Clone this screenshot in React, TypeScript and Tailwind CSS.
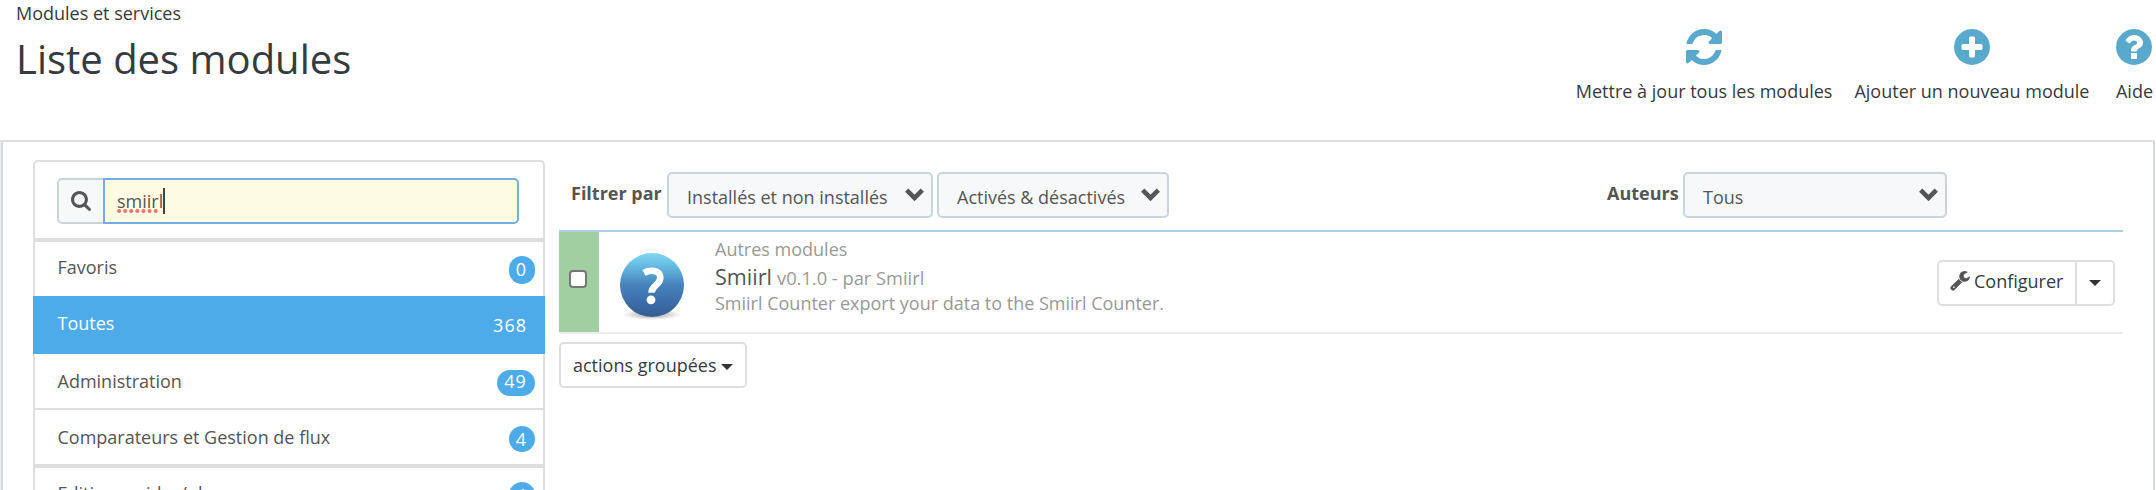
import React from "react";

const SEARCH =
  "M1152 832q0-185-131.5-316.5t-316.5-131.5-316.5 131.5-131.5 316.5 131.5 316.5 316.5 131.5 316.5-131.5 131.5-316.5zm512 832q0 52-38 90t-90 38q-54 0-90-38l-343-342q-179 124-399 124-143 0-273.5-55.5t-225-150-150-225-55.5-273.5 55.5-273.5 150-225 225-150 273.5-55.5 273.5 55.5 225 150 150 225 55.5 273.5q0 220-124 399l343 343q37 37 37 90z";
const REFRESH =
  "M1511 1056q0 5-1 7-64 268-268 434.5t-478 166.5q-146 0-282.5-55t-243.5-157l-129 129q-19 19-45 19t-45-19-19-45v-448q0-26 19-45t45-19h448q26 0 45 19t19 45-19 45l-137 137q71 66 161 102t187 36q134 0 250-65t186-179q11-17 53-117 8-23 30-23h192q13 0 22.5 9.5t9.5 22.5zm25-800v448q0 26-19 45t-45 19h-448q-26 0-45-19t-19-45 19-45l138-138q-148-137-349-137-134 0-250 65t-186 179q-11 17-53 117-8 23-30 23h-199q-13 0-22.5-9.5t-9.5-22.5v-7q65-268 270-434.5t480-166.5q146 0 284 55.5t245 156.5l130-129q19-19 45-19t45 19 19 45z";
const PLUS =
  "M1216 960v-128q0-26-19-45t-45-19h-256v-256q0-26-19-45t-45-19h-128q-26 0-45 19t-19 45v256h-256q-26 0-45 19t-19 45v128q0 26 19 45t45 19h256v256q0 26 19 45t45 19h128q26 0 45-19t19-45v-256h256q26 0 45-19t19-45zm320-64q0 209-103 385.5t-279.5 279.5-385.5 103-385.5-103-279.5-279.5-103-385.5 103-385.5 279.5-279.5 385.5-103 385.5 103 279.5 279.5 103 385.5z";
const HELP =
  "M896 1376v-192q0-14-9-23t-23-9h-192q-14 0-23 9t-9 23v192q0 14 9 23t23 9h192q14 0 23-9t9-23zm256-672q0-88-55.5-163t-138.5-116-170-41q-243 0-371 213-15 24 8 42l132 100q7 6 19 6 16 0 25-12 53-68 86-92 34-24 86-24 48 0 85.5 26t37.5 59q0 38-20 61t-68 45q-63 28-115.5 86.5t-52.5 125.5v36q0 14 9 23t23 9h192q14 0 23-9t9-23q0-19 21.5-49.5t54.5-49.5q32-18 49-28.5t46-35 44.5-48 28-60.5 12.5-81zm384 192q0 209-103 385.5t-279.5 279.5-385.5 103-385.5-103-279.5-279.5-103-385.5 103-385.5 279.5-279.5 385.5-103 385.5 103 279.5 279.5 103 385.5z";
const WRENCH =
  "M384 1472q0-26-19-45t-45-19-45 19-19 45 19 45 45 19 45-19 19-45zm644-420l-682 682q-37 37-90 37-52 0-91-37l-106-108q-38-36-38-90 0-53 38-91l681-681q39 98 114.5 173.5t173.5 114.5zm634-435q0 39-23 106-47 134-164.5 217.5t-258.5 83.5q-185 0-316.5-131.5t-131.5-316.5 131.5-316.5 316.5-131.5q58 0 121.5 16.5t107.5 46.5q16 11 16 28t-16 28l-293 169v224l193 107q5-3 79-48.5t135.5-81 70.5-35.5q15 0 23.5 10t8.5 25z";

function ToolbarAction({ path, label, className }: { path: string; label: string; className?: string }) {
  return (
    <a className={`flex flex-col items-center whitespace-nowrap ${className ?? ""}`}>
      <svg className="h-9 w-9 shrink-0" viewBox="0 128 1536 1536" fill="#58a9cb">
        <path d={path} />
      </svg>
      <span className="mt-[14px] leading-6">{label}</span>
    </a>
  );
}

function Select({ label, className }: { label: string; className: string }) {
  return (
    <div
      className={`flex h-[46px] justify-between rounded-[5px] border-2 border-[#c7d6db] bg-[#f6f8fa] pl-[18px] pr-[7px] pt-[11px] ${className}`}
    >
      <span className="whitespace-nowrap leading-6">{label}</span>
      <svg className="mt-[3px] h-[13px] w-[19px]" viewBox="0 0 19 13">
        <path d="M1.7 2.2 L9.5 10 L17.3 2.2" fill="none" stroke="#555" strokeWidth="4.6" />
      </svg>
    </div>
  );
}

function Caret({ className }: { className?: string }) {
  return (
    <svg className={`h-[6px] w-3 ${className ?? ""}`} viewBox="0 0 12 6" fill="#333">
      <path d="M0 0h12L6 6z" />
    </svg>
  );
}

function Category({
  name,
  count,
  row,
  text,
  badge,
}: {
  name: string;
  count: string;
  row: string;
  text: string;
  badge: string;
}) {
  return (
    <li className={`flex shrink-0 items-start justify-between pl-[22.5px] pr-2 ${row}`}>
      <span className={`whitespace-nowrap leading-6 ${text}`}>{name}</span>
      <span
        className={`flex justify-center rounded-full bg-[#4eabea] pl-[7px] pr-2 tracking-[1px] text-white ${badge}`}
      >
        {count}
      </span>
    </li>
  );
}

function ModuleLogo() {
  return (
    <svg className="ml-5 mt-[19px] h-[70px] w-[66px] shrink-0" viewBox="0 0 66 70">
      <defs>
        <linearGradient id="ball" x1="0" y1="0" x2="0" y2="1">
          <stop offset="0" stopColor="#7fd6f2" />
          <stop offset="0.18" stopColor="#68bfe4" />
          <stop offset="0.5" stopColor="#4682bb" />
          <stop offset="0.75" stopColor="#3d6fab" />
          <stop offset="1" stopColor="#355c90" />
        </linearGradient>
        <radialGradient id="shade">
          <stop offset="0" stopColor="#777" stopOpacity="0.7" />
          <stop offset="0.6" stopColor="#999" stopOpacity="0.4" />
          <stop offset="1" stopColor="#bbb" stopOpacity="0" />
        </radialGradient>
      </defs>
      <ellipse cx="33" cy="63.5" rx="30" ry="5.5" fill="url(#shade)" />
      <circle cx="33" cy="34" r="32" fill="url(#ball)" />
      <path
        d="M25 21.800c6-3.300 16.300-3 16.300 5 0 7.500-8.800 7.500-8.800 15"
        fill="none"
        stroke="#fff"
        strokeWidth="6.6"
      />
      <circle cx="32" cy="48.8" r="4.4" fill="#fff" />
    </svg>
  );
}

export default function App() {
  return (
    <div className="flex h-[490px] w-full flex-col overflow-hidden bg-white font-['Open_Sans',sans-serif] text-[18px] text-[#555]">
      <header className="flex h-[140px] shrink-0 justify-between pl-4 pr-[3px] text-[#363a41]">
        <div className="pt-px">
          <div className="leading-6">Modules et services</div>
          <h1 className="mt-[9px] text-[40px] leading-[50px]">Liste des modules</h1>
        </div>
        <nav className="flex pt-[29px]">
          <ToolbarAction path={REFRESH} label="Mettre à jour tous les modules" />
          <ToolbarAction path={PLUS} label="Ajouter un nouveau module" className="ml-[22px]" />
          <ToolbarAction path={HELP} label="Aide" className="ml-[26.5px]" />
        </nav>
      </header>

      <main className="mr-px flex min-h-0 flex-1 border-t-2 border-[#dedede]">
        <div className="w-[3px] shrink-0 border-r-2 border-[#d3d8db] bg-[#eff1f2]" />

        <aside className="ml-[30px] mt-[18px] flex w-[512px] shrink-0 flex-col">
          <div className="h-20 shrink-0 rounded-t-[5px] border-2 border-[#dedede] px-[22px] pt-4">
            <div className="flex h-[46px] w-[462px]">
              <div className="flex w-[46px] items-center justify-center rounded-l-[5px] border-2 border-r-0 border-[#c7d6db] bg-[#f6f8fa]">
                <svg className="h-5 w-5" viewBox="0 128 1664 1664" fill="#555">
                  <path d={SEARCH} />
                </svg>
              </div>
              <div className="flex flex-1 rounded-r-[5px] border-2 border-[#74ace6] bg-[#fdfbe2] pl-3 pt-2">
                <span className="relative h-[26px] leading-[26px]">
                  smiirl
                  <svg className="absolute left-0 top-[21px] h-1 w-[41px]" viewBox="0 0 41 4">
                    <path
                      d="M2 2H40"
                      stroke="#f0776c"
                      strokeWidth="4"
                      strokeLinecap="round"
                      strokeDasharray="0.1 6"
                    />
                  </svg>
                </span>
                <span className="h-[26px] w-0.5 bg-[#444]" />
              </div>
            </div>
          </div>
          <ul className="flex min-h-0 flex-col overflow-hidden">
            <Category
              name="Favoris"
              count="0"
              row="h-14 border-x-2 border-t-2 border-[#dedede]"
              text="mt-[13px]"
              badge="mt-3.5 h-7 w-[26px] leading-[26px]"
            />
            <Category
              name="Toutes"
              count="368"
              row="h-[58px] border-2 border-[#4eabea] bg-[#4eabea] text-white"
              text="mt-[13px]"
              badge="mt-3.5 h-7 leading-[26px]"
            />
            <Category
              name="Administration"
              count="49"
              row="h-[54px] border-x-2 border-[#dedede]"
              text="mt-[15px]"
              badge="mt-4 h-[26px] w-[38px] leading-[22px]"
            />
            <Category
              name="Comparateurs et Gestion de flux"
              count="4"
              row="h-14 border-x-2 border-t-2 border-[#dedede]"
              text="mt-[15px]"
              badge="mt-4 h-[26px] w-[26px] leading-[26px]"
            />
            <Category
              name="Edition, guides/plans"
              count="4"
              row="h-14 border-x-2 border-t-4 border-[#dedede]"
              text="mt-[13px]"
              badge="mt-3.5 h-[26px] w-[26px] leading-[26px]"
            />
          </ul>
        </aside>

        <section className="ml-[14px] flex w-[1564px] shrink-0 flex-col pt-[30px]">
          <div className="flex h-[58px] shrink-0">
            <strong className="ml-3 w-24 whitespace-nowrap pt-[9px] leading-6">Filtrer par</strong>
            <Select label="Installés et non installés" className="w-[266px]" />
            <Select label="Activés & désactivés" className="ml-1 w-[232px]" />
            <strong className="ml-[438px] w-[76px] pt-[9px] leading-6">Auteurs</strong>
            <Select label="Tous" className="w-[264px]" />
          </div>

          <article className="flex h-[104px] shrink-0 border-y-2 border-t-[#a8d0ea] border-b-[#ececec]">
            <div className="flex w-10 shrink-0 justify-center bg-[#a2cfa2] pt-[38px]">
              <span className="-ml-0.5 h-[18px] w-[18px] rounded-[4px] border-2 border-[#767676] bg-white" />
            </div>
            <ModuleLogo />
            <div className="ml-[30px] whitespace-nowrap pt-[5px] text-[#999]">
              <div className="leading-6">Autres modules</div>
              <div className="mt-0.5 h-7 leading-7">
                <span className="text-[21.6px] text-[#555]">Smiirl</span>
                <span className="ml-[5px] text-[18.3px]">v0.1.0 - par Smiirl</span>
              </div>
              <div className="leading-6">Smiirl Counter export your data to the Smiirl Counter.</div>
            </div>
            <div className="ml-auto mr-2 mt-7 flex h-[46px] rounded-[5px] border-2 border-[#dedede] text-[#363a41]">
              <div className="flex w-[136px] pl-[11px]">
                <svg className="mt-[9px] h-5 w-5" viewBox="0 128 1664 1664" fill="#555">
                  <path d={WRENCH} />
                </svg>
                <span className="ml-1 mt-[7px] leading-6">Configurer</span>
              </div>
              <div className="flex w-[38px] justify-center border-l-2 border-[#dedede] pt-[18px]">
                <Caret />
              </div>
            </div>
          </article>

          <button className="mt-2 flex h-[46px] w-[188px] shrink-0 rounded-[5px] border-2 border-[#dedede] pl-3 pt-[9px] text-[#363a41]">
            <span className="leading-6">actions groupées</span>
            <Caret className="ml-1 mt-[11px]" />
          </button>
        </section>

        <div className="ml-auto w-0.5 bg-[#d3d8db]" />
      </main>
    </div>
  );
}
